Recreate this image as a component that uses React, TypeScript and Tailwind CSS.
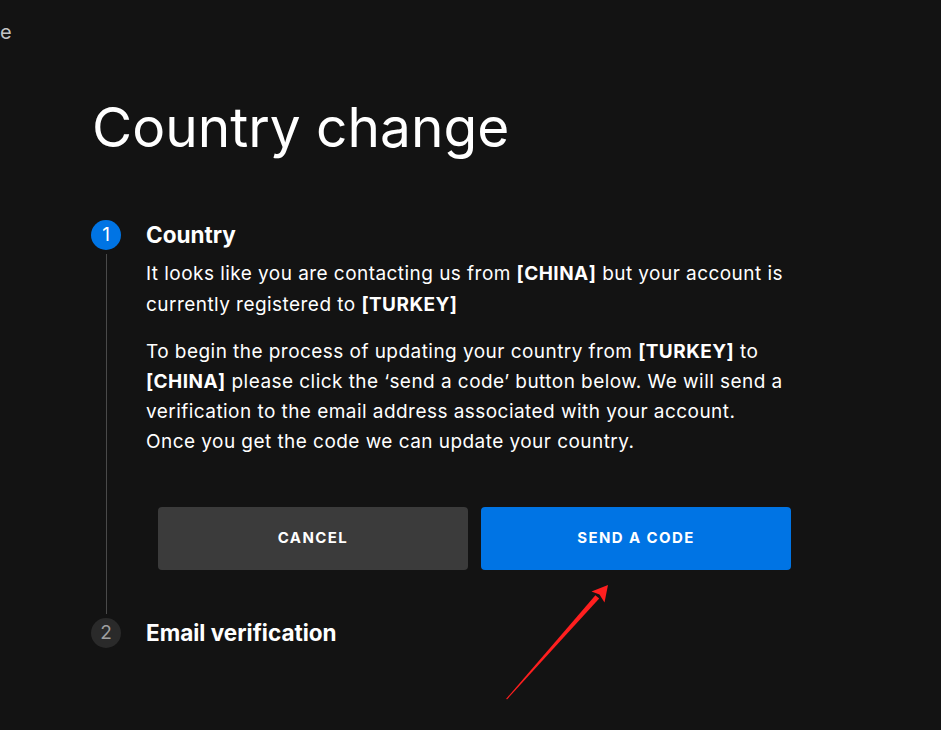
import React from 'react';

function StepBadge({ n, active }: { n: number; active?: boolean }) {
  return (
    <div
      className={
        active
          ? 'flex h-[30px] w-[30px] shrink-0 items-center justify-center rounded-full bg-[#0074e4] text-[19px] text-white'
          : 'flex h-[30px] w-[30px] shrink-0 items-center justify-center rounded-full bg-[#2a2a2a] text-[19px] text-[#a0a0a0]'
      }
    >
      {n}
    </div>
  );
}

export default function App() {
  return (
    <div className="relative min-h-screen overflow-hidden bg-[#131313] font-['Inter',sans-serif] text-white">
      <div className="pt-[20px] text-[20px] leading-6 text-[#c4c4c4]">e</div>

      <div className="pl-[91px] pt-[56px]">
        <h1 className="pl-px text-[55px] font-normal leading-[55px]">Country change</h1>

        <div className="mt-[65px]">
          {/* step 1 */}
          <div className="flex gap-[25px]">
            <div className="flex w-[30px] flex-col items-center">
              <StepBadge n={1} active />
              <div className="my-[4px] w-px flex-1 bg-[#4a4a4a]" />
            </div>
            <div className="pb-[48px]">
              <h2 className="text-[22.5px] font-bold leading-[30px]">Country</h2>
              <p className="mt-[9px] text-[19px] leading-[30.5px] tracking-[0.45px]">
                It looks like you are contacting us from <b>[CHINA]</b> but your account is
                <br />
                currently registered to <b>[TURKEY]</b>
              </p>
              <p className="mt-[17px] text-[19px] leading-[30px] tracking-[0.45px]">
                To begin the process of updating your country from <b>[TURKEY]</b> to
                <br />
                <b>[CHINA]</b> please click the ‘send a code’ button below. We will send a
                <br />
                verification to the email address associated with your account.
                <br />
                Once you get the code we can update your country.
              </p>
              <div className="ml-[12px] mt-[50px] flex gap-[13px]">
                <button className="h-[63px] w-[310px] rounded-[4px] bg-[#3b3b3b] text-[15px] font-bold tracking-[1.4px] text-white">
                  CANCEL
                </button>
                <button className="h-[63px] w-[310px] rounded-[4px] bg-[#0074e4] text-[15px] font-bold tracking-[1.4px] text-white">
                  SEND A CODE
                </button>
              </div>
            </div>
          </div>

          {/* step 2 */}
          <div className="flex items-center gap-[25px]">
            <StepBadge n={2} />
            <h2 className="text-[22.5px] font-bold leading-[30px]">Email verification</h2>
          </div>
        </div>
      </div>

      {/* annotation arrow */}
      <svg className="pointer-events-none absolute left-0 top-0" width="941" height="730" viewBox="0 0 941 730">
        <polygon points="506,699 595.4,595.2 599.2,598.6 507.2,699.2" fill="#ff1f1f" />
        <polygon points="608,585 591.5,591.5 599.5,594.5 604.5,602.5" fill="#ff1f1f" />
      </svg>
    </div>
  );
}
